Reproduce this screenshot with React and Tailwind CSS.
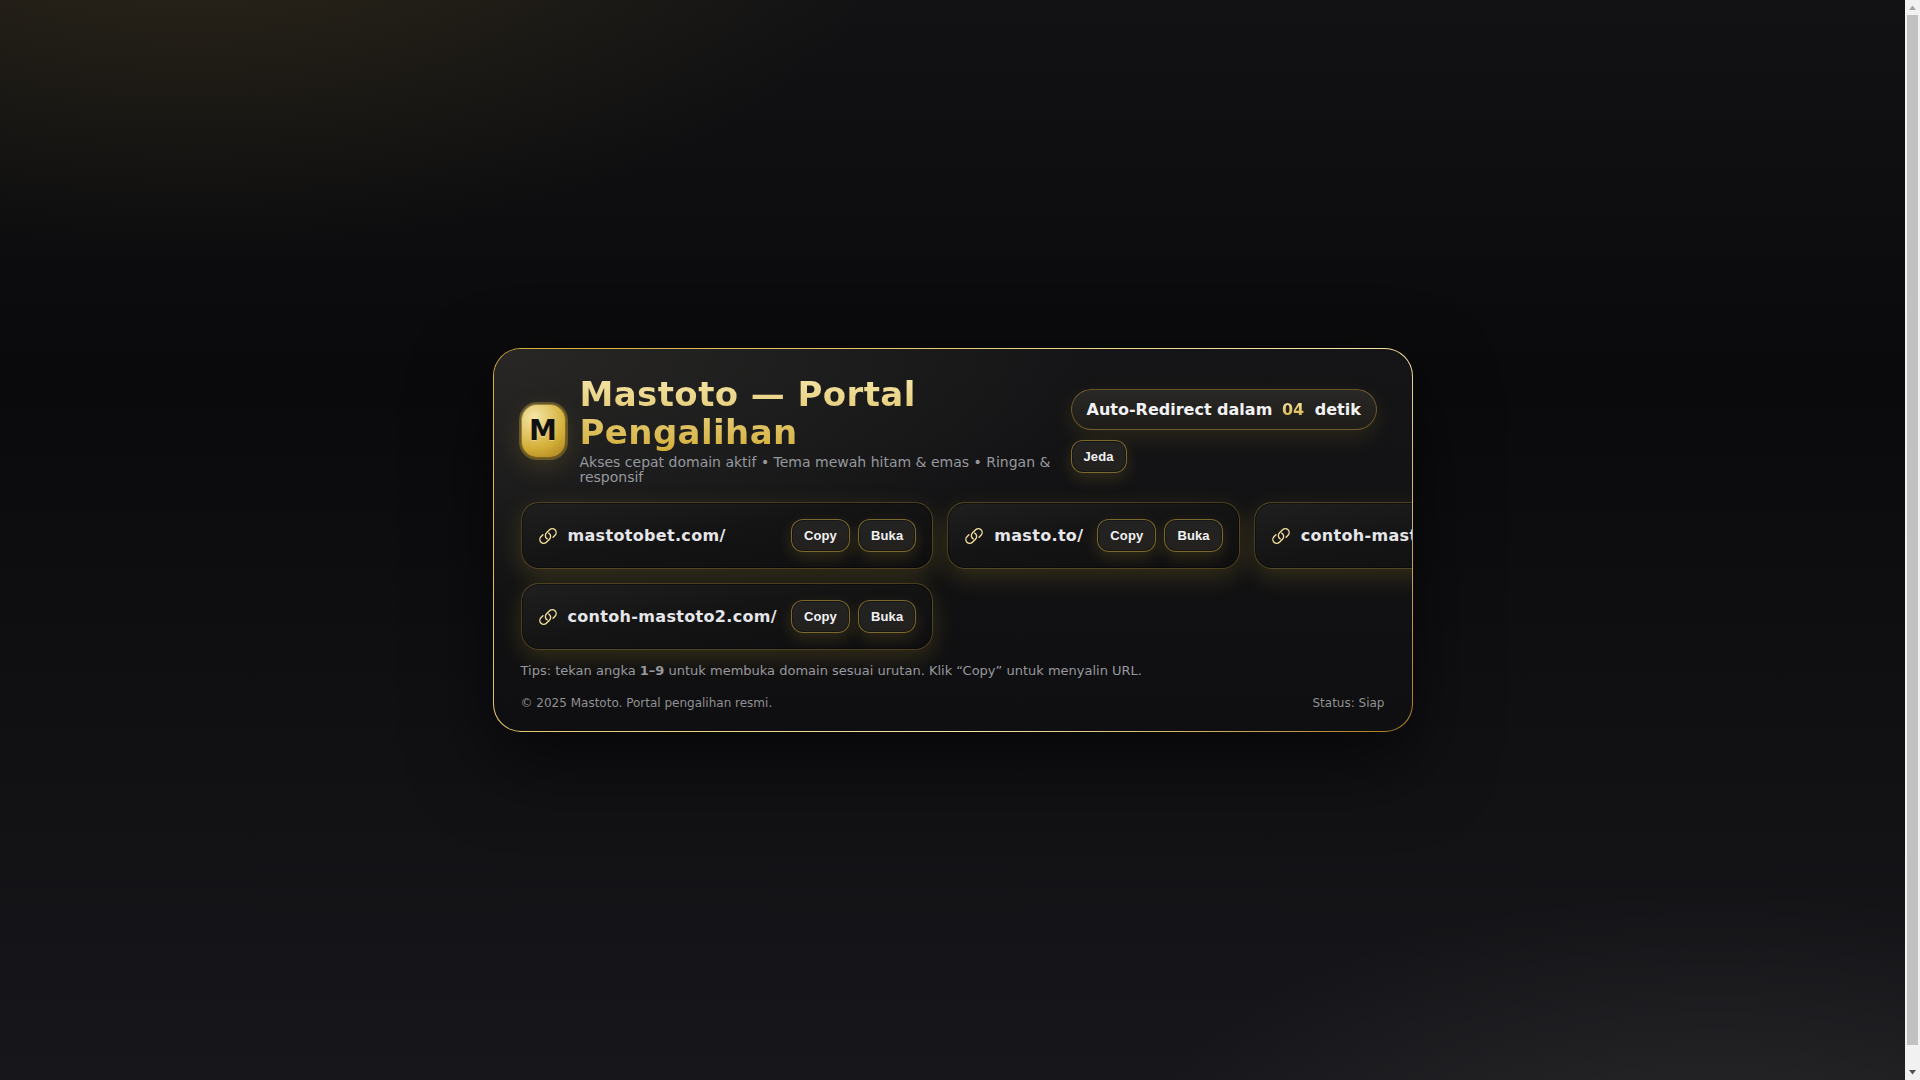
import { useEffect, useState } from 'react';

const DOMAINS = [
  'mastotobet.com/',
  'masto.to/',
  'contoh-mastoto1.com/',
  'contoh-mastoto2.com/',
];

const LinkIcon = () => (
  <svg
    viewBox="-1 -1 26 26"
    className="size-5 shrink-0"
    fill="none"
    stroke="#f1dd9b"
    strokeWidth="1.8"
    strokeLinecap="round"
    strokeLinejoin="round"
    aria-hidden="true"
  >
    <path d="M13 8.2a5 5 0 0 1 .9 7.9l-4 4a5 5 0 0 1-7.07-7.07l2.6-2.6" />
    <path d="M11 15.8a5 5 0 0 1-.9-7.9l4-4a5 5 0 0 1 7.07 7.07l-2.6 2.6" />
  </svg>
);

const GoldButton = ({ children, onClick }) => (
  <button
    type="button"
    onClick={onClick}
    className="shrink-0 cursor-pointer rounded-xl border border-[#d4af37]/50 bg-linear-to-b from-[#232323] to-[#23211e] px-3 py-2 font-['Liberation_Sans',sans-serif] text-[13px] leading-[15px] font-bold tracking-[0.01em] text-[#f2f2f4] shadow-[0_6px_16px_rgba(212,175,55,0.16),inset_0_0_0_1px_rgba(0,0,0,0.35)]"
  >
    {children}
  </button>
);

const DomainCard = ({ domain }) => {
  const url = `https://${domain}`;

  return (
    <li className="flex items-center gap-3.5 rounded-[18px] border border-[#d4af37]/30 bg-[linear-gradient(170deg,#1f1f1f_0%,#141415_45%,#0e0e10_100%)] p-4 shadow-[0_8px_24px_rgba(212,175,55,0.18),inset_0_0_0_1px_rgba(0,0,0,0.4)]">
      <a href={url} className="flex flex-1 items-center gap-2.5 text-base leading-5 font-bold tracking-[0.02em] text-[#e6e6ea]">
        <LinkIcon />
        {domain}
      </a>
      <div className="flex gap-2">
        <GoldButton onClick={() => navigator.clipboard?.writeText(url)}>Copy</GoldButton>
        <GoldButton onClick={() => window.open(url, '_blank')}>Buka</GoldButton>
      </div>
    </li>
  );
};

const Scrollbar = () => (
  <div className="flex w-[15px] shrink-0 flex-col items-center bg-[#f1f1f1]" aria-hidden="true">
    <svg viewBox="0 0 15 15" className="size-[15px] shrink-0" fill="#a3a3a3">
      <path d="M7.5 5.5l3.5 4.5H4z" />
    </svg>
    <div className="w-[11px] flex-1 bg-[#c1c1c1]" />
    <svg viewBox="0 0 15 15" className="mt-5 size-[15px] shrink-0" fill="#505050">
      <path d="M7.5 9.5L4 5h7z" />
    </svg>
  </div>
);

const App = () => {
  const [paused, setPaused] = useState(false);

  // Number keys open the domain at that position
  useEffect(() => {
    const onKey = (e) => {
      const domain = DOMAINS[Number(e.key) - 1];
      if (domain) window.open(`https://${domain}`, '_blank');
    };
    window.addEventListener('keydown', onKey);
    return () => window.removeEventListener('keydown', onKey);
  }, []);

  return (
    <div className="flex min-h-screen font-['DejaVu_Sans',sans-serif]">
      <main className="flex min-w-0 flex-1 items-center justify-center bg-[radial-gradient(1200px_600px_at_10%_-10%,rgba(212,170,60,0.14),transparent_60%),radial-gradient(1000px_500px_at_90%_110%,rgba(255,250,235,0.08),transparent_60%),linear-gradient(180deg,#121214_0%,#0a0a0c_35%,#17171b_100%)]">
        <section className="w-full max-w-[920px] overflow-hidden rounded-[28px] border border-transparent bg-[radial-gradient(600px_260px_at_0%_0%,#282725,transparent),linear-gradient(180deg,#151517,#0f0f11),linear-gradient(135deg,#d4af37_0%,#f5e6a8_66%,#a67c20_100%)] [background-clip:padding-box,padding-box,border-box] [background-origin:padding-box,padding-box,border-box] px-[27px] pt-[26px] pb-5 shadow-[0_30px_80px_rgba(0,0,0,0.6)]">
          <header className="flex items-center gap-4">
            <div className="flex flex-1 items-center gap-3.5">
              <div className="flex h-[54px] w-[45px] shrink-0 items-center justify-center rounded-2xl bg-[radial-gradient(circle_at_30%_25%,#f5e6a8_0%,#d4af37_60%,#a67c20_100%)] text-[28px] font-bold text-[#111111] shadow-[0_0_0_2px_rgba(212,175,55,0.35),0_8px_26px_rgba(212,175,55,0.18),inset_0_0_0_1px_rgba(0,0,0,0.35)] [text-shadow:0_1px_0_rgba(255,255,255,0.35)]">
                M
              </div>
              <div className="pb-0.5">
                <h1 className="bg-linear-to-b from-[#f5e6a8] to-[#d4af37] bg-clip-text text-[34px] leading-[38px] font-bold tracking-[0.4px] text-transparent">
                  Mastoto — Portal Pengalihan
                </h1>
                <p className="mt-1 text-sm leading-[15px] text-[#96989e]">
                  Akses cepat domain aktif • Tema mewah hitam &amp; emas • Ringan &amp; responsif
                </p>
              </div>
            </div>
            <div className="flex w-[314px] shrink-0 flex-wrap gap-2.5">
              <div className="rounded-full border border-[#d4af37]/40 bg-linear-to-b from-[#292826] to-[#1d1c18] px-[15px] py-2.5 text-base leading-[19px] font-bold whitespace-nowrap text-[#f2f2f4] shadow-[0_8px_22px_rgba(212,175,55,0.12)]">
                Auto-Redirect dalam{' '}
                <span className="mr-[5px] ml-1 bg-linear-to-b from-[#f5e6a8] to-[#d4af37] bg-clip-text text-transparent">04</span>{' '}
                detik
              </div>
              <GoldButton onClick={() => setPaused(!paused)}>{paused ? 'Lanjut' : 'Jeda'}</GoldButton>
            </div>
          </header>

          <ul className="mt-[15px] grid grid-cols-[repeat(3,max-content)] gap-3.5">
            {DOMAINS.map((domain) => (
              <DomainCard key={domain} domain={domain} />
            ))}
          </ul>

          <p className="mt-[13px] text-[13px] leading-4 text-[#96989e]">
            Tips: tekan angka <b>1–9</b> untuk membuka domain sesuai urutan. Klik “Copy” untuk menyalin URL.
          </p>
          <footer className="mt-4 flex justify-between text-xs leading-4 text-[#8f9092]">
            <span>© 2025 Mastoto. Portal pengalihan resmi.</span>
            <span>Status: Siap</span>
          </footer>
        </section>
      </main>
      <Scrollbar />
    </div>
  );
};

export default App;
